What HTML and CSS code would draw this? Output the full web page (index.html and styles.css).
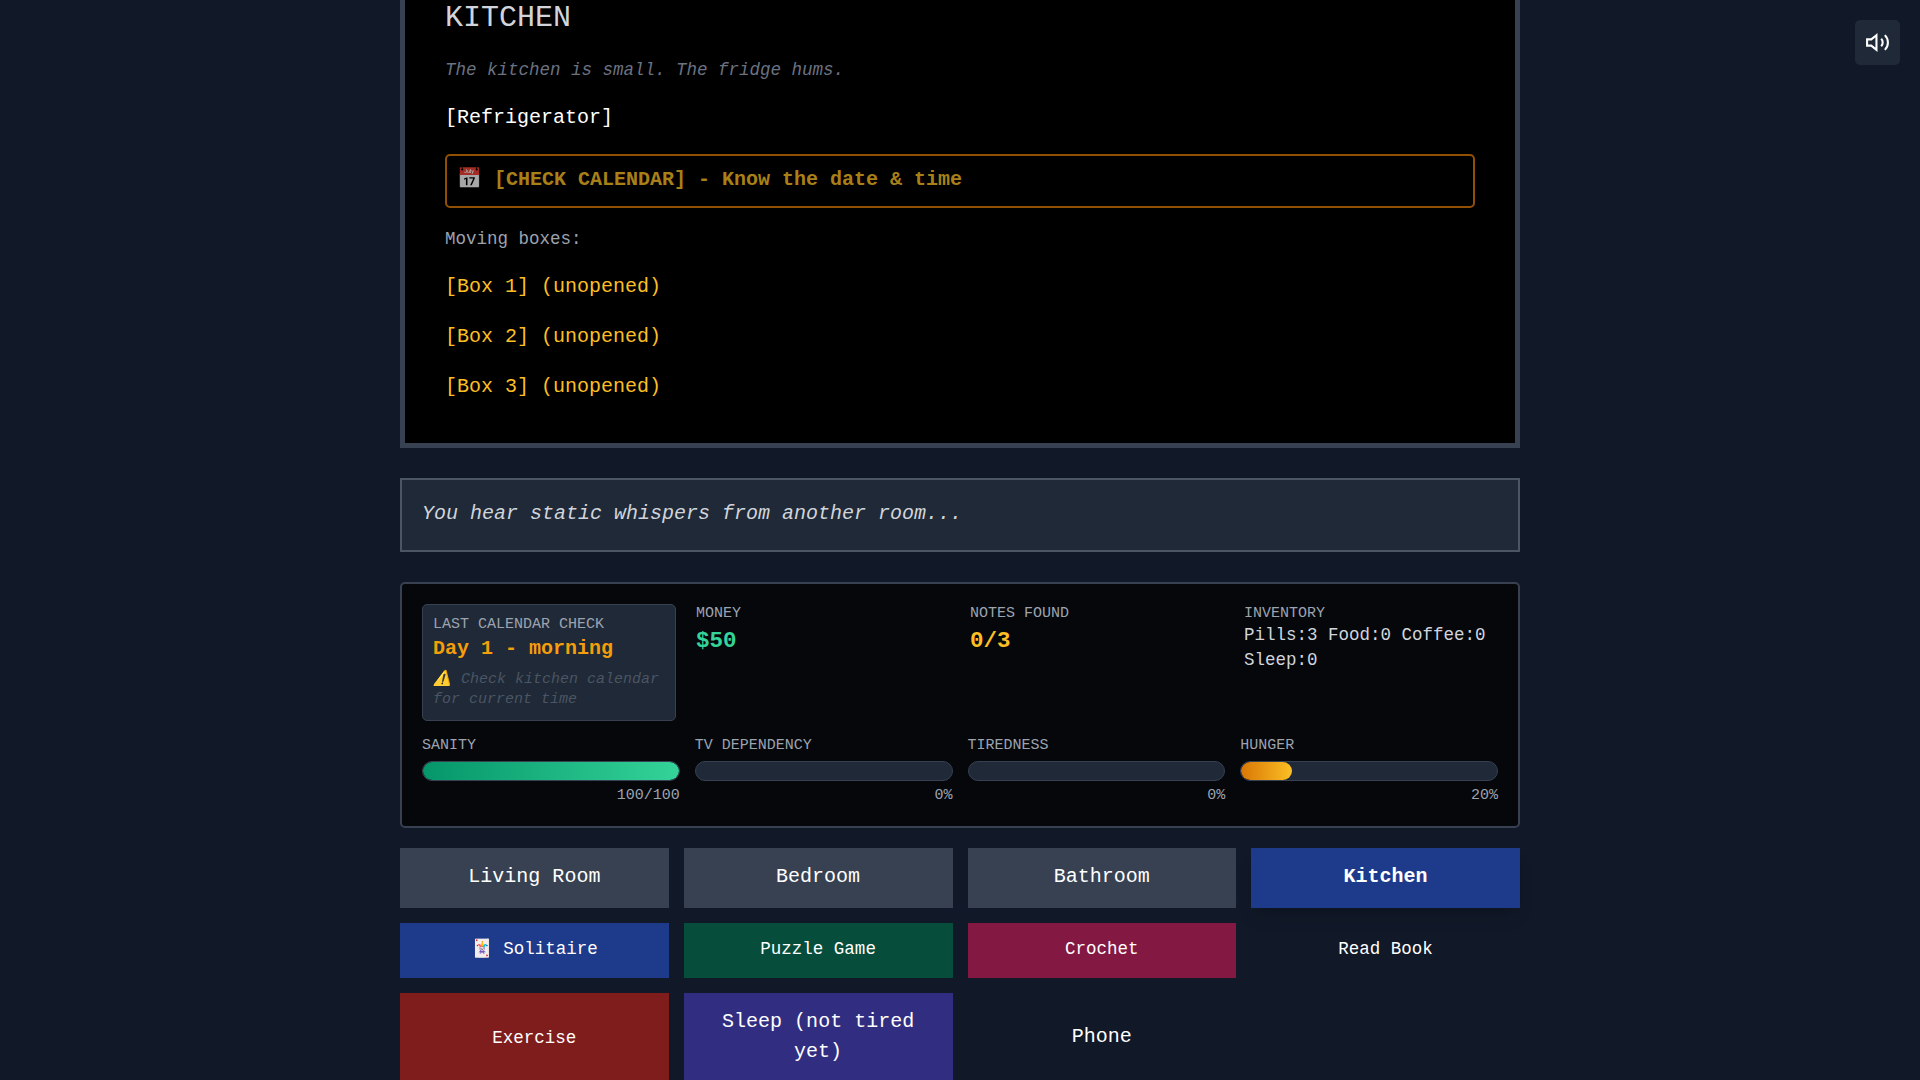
FILE: index.html
```html
<!DOCTYPE html>
<html lang="en">
<head>
    <meta charset="UTF-8">
    <meta name="viewport" content="width=device-width, initial-scale=1.0">
    <title>Kitchen</title>
    <link rel="stylesheet" href="styles.css">
</head>
<body>
    <button class="sound-btn" aria-label="Toggle sound">
        <svg viewBox="0 0 24 24" fill="none" stroke="currentColor" stroke-width="2">
            <polygon points="11 5 6 9 2 9 2 15 6 15 11 19 11 5"></polygon>
            <path d="M15.54 8.46a5 5 0 0 1 0 7.07"></path>
            <path d="M19.07 4.93a10 10 0 0 1 0 14.14"></path>
        </svg>
    </button>

    <main class="game">
        <!-- Current room -->
        <section class="scene">
            <h2>KITCHEN</h2>
            <p class="scene-desc">The kitchen is small. The fridge hums.</p>
            <button class="action">[Refrigerator]</button>
            <button class="action calendar">📅 [CHECK CALENDAR] - Know the date &amp; time</button>
            <p class="scene-note">Moving boxes:</p>
            <button class="action box">[Box 1] (unopened)</button>
            <button class="action box">[Box 2] (unopened)</button>
            <button class="action box">[Box 3] (unopened)</button>
        </section>

        <div class="message">You hear static whispers from another room...</div>

        <!-- Player status -->
        <section class="status">
            <div class="stats">
                <div class="last-check">
                    <div class="label">LAST CALENDAR CHECK</div>
                    <div class="day">Day 1 - morning</div>
                    <div class="hint">⚠️ Check kitchen calendar for current time</div>
                </div>
                <div>
                    <div class="label">MONEY</div>
                    <div class="value money">$50</div>
                </div>
                <div>
                    <div class="label">NOTES FOUND</div>
                    <div class="value notes">0/3</div>
                </div>
                <div>
                    <div class="label">INVENTORY</div>
                    <div class="inventory">Pills:3 Food:0 Coffee:0 Sleep:0</div>
                </div>
            </div>
            <div class="meters">
                <div>
                    <div class="label">SANITY</div>
                    <div class="bar"><div class="fill sanity" style="width: 100%"></div></div>
                    <div class="meter-value">100/100</div>
                </div>
                <div>
                    <div class="label">TV DEPENDENCY</div>
                    <div class="bar"><div class="fill" style="width: 0%"></div></div>
                    <div class="meter-value">0%</div>
                </div>
                <div>
                    <div class="label">TIREDNESS</div>
                    <div class="bar"><div class="fill" style="width: 0%"></div></div>
                    <div class="meter-value">0%</div>
                </div>
                <div>
                    <div class="label">HUNGER</div>
                    <div class="bar"><div class="fill hunger" style="width: 20%"></div></div>
                    <div class="meter-value">20%</div>
                </div>
            </div>
        </section>

        <!-- Rooms and activities -->
        <nav class="actions">
            <button class="btn">Living Room</button>
            <button class="btn">Bedroom</button>
            <button class="btn">Bathroom</button>
            <button class="btn active">Kitchen</button>
            <button class="btn small blue">🃏 Solitaire</button>
            <button class="btn small green">Puzzle Game</button>
            <button class="btn small pink">Crochet</button>
            <button class="btn small plain">Read Book</button>
            <button class="btn small red">Exercise</button>
            <button class="btn indigo">Sleep (not tired yet)</button>
            <button class="btn plain">Phone</button>
        </nav>
    </main>
</body>
</html>
```

FILE: styles.css
```css
* {
    box-sizing: border-box;
    margin: 0;
    padding: 0;
}

body {
    height: 100vh;
    overflow: hidden;
    background: #111827;
    color: #fff;
    font-family: "Liberation Mono", "Courier New", monospace;
    font-size: 20px;
    line-height: 30px;
}

button {
    border: none;
    background: none;
    color: inherit;
    font: inherit;
    cursor: pointer;
}

.sound-btn {
    position: fixed;
    top: 20px;
    right: 20px;
    width: 45px;
    height: 45px;
    padding: 10px;
    border-radius: 5px;
    background: #1f2937;
}

.sound-btn svg {
    display: block;
    width: 25px;
    height: 25px;
}

/* the room panel runs off the top of the window */
.game {
    width: 1120px;
    margin: -46px auto 0;
}

/* Scene */
.scene {
    display: flex;
    flex-direction: column;
    gap: 20px;
    padding: 40px;
    border: 5px solid #374151;
    background: #000;
}

.scene h2 {
    padding-bottom: 2px;
    color: #d1d5db;
    font-size: 30px;
    font-weight: normal;
    line-height: 38px;
}

.scene-desc,
.scene-note {
    padding-bottom: 2px;
    color: #6b7280;
    font-size: 17.5px;
    line-height: 23px;
}

.scene-desc {
    font-style: italic;
}

.scene-note {
    color: #9ca3af;
}

.action {
    height: 30px;
    padding-bottom: 2px;
    line-height: 28px;
    text-align: left;
}

.action.box {
    color: #fbbf24;
}

.action.calendar {
    height: 54px;
    padding: 10px 10px 12px;
    border: 2px solid #d97706;
    border-radius: 5px;
    color: #fbbf24;
    font-weight: bold;
    opacity: 0.67;
}

.message {
    margin: 30px 0;
    padding: 20px 20px 22px;
    border: 2px solid #4b5563;
    background: #1f2937;
    color: #d1d5db;
    font-style: italic;
    line-height: 28px;
}

/* Status panel */
.status {
    padding: 20px;
    border: 2px solid #374151;
    border-radius: 5px;
    background: rgba(0, 0, 0, 0.7);
}

.stats,
.meters {
    display: grid;
    grid-template-columns: repeat(4, 1fr);
    gap: 20px;
}

.meters {
    gap: 15px;
    margin-top: 15px;
}

.label {
    color: #9ca3af;
    font-size: 15px;
    line-height: 20px;
}

.last-check {
    padding: 10px;
    border: 1px solid #374151;
    border-radius: 5px;
    background: #1f2937;
}

.day {
    padding-bottom: 2px;
    color: #f59e0b;
    font-weight: bold;
    line-height: 28px;
}

.hint {
    height: 40px;
    margin-top: 5px;
    color: #4b5563;
    font-size: 15px;
    font-style: italic;
    line-height: 20px;
}

.value {
    font-size: 22.5px;
    font-weight: bold;
    line-height: 35px;
}

.money {
    color: #34d399;
}

.notes {
    color: #fbbf24;
}

.inventory {
    margin-top: -1px;
    color: #d1d5db;
    font-size: 17.5px;
    line-height: 25px;
}

.bar {
    height: 20px;
    margin: 5px 0;
    overflow: hidden;
    border: 1px solid #374151;
    border-radius: 10px;
    background: #1f2937;
}

.fill {
    height: 100%;
    border-radius: 10px;
}

.sanity {
    background: linear-gradient(to right, #059669, #34d399);
}

.hunger {
    background: linear-gradient(to right, #d97706, #fbbf24);
}

.meter-value {
    color: #9ca3af;
    font-size: 15px;
    line-height: 20px;
    text-align: right;
}

/* Buttons */
.actions {
    display: grid;
    grid-template-columns: repeat(4, 1fr);
    grid-template-rows: 60px 55px 90px;
    gap: 15px;
    margin-top: 20px;
}

.btn {
    padding: 14px 20px 16px;
    background: #374151;
}

.btn.small {
    font-size: 17.5px;
    line-height: 25px;
}

.btn.active {
    background: #1e3a8a;
    box-shadow: 0 12px 19px -4px rgba(0, 0, 0, 0.1), 0 5px 8px -5px rgba(0, 0, 0, 0.1);
    font-weight: bold;
}

.btn.blue {
    background: #1e3a8a;
}

.btn.green {
    background: #064e3b;
}

.btn.pink {
    background: #831843;
}

.btn.red {
    padding: 15px 20px;
    background: #7f1d1d;
}

.btn.indigo {
    background: #312e81;
}

.btn.plain {
    background: none;
}
```
